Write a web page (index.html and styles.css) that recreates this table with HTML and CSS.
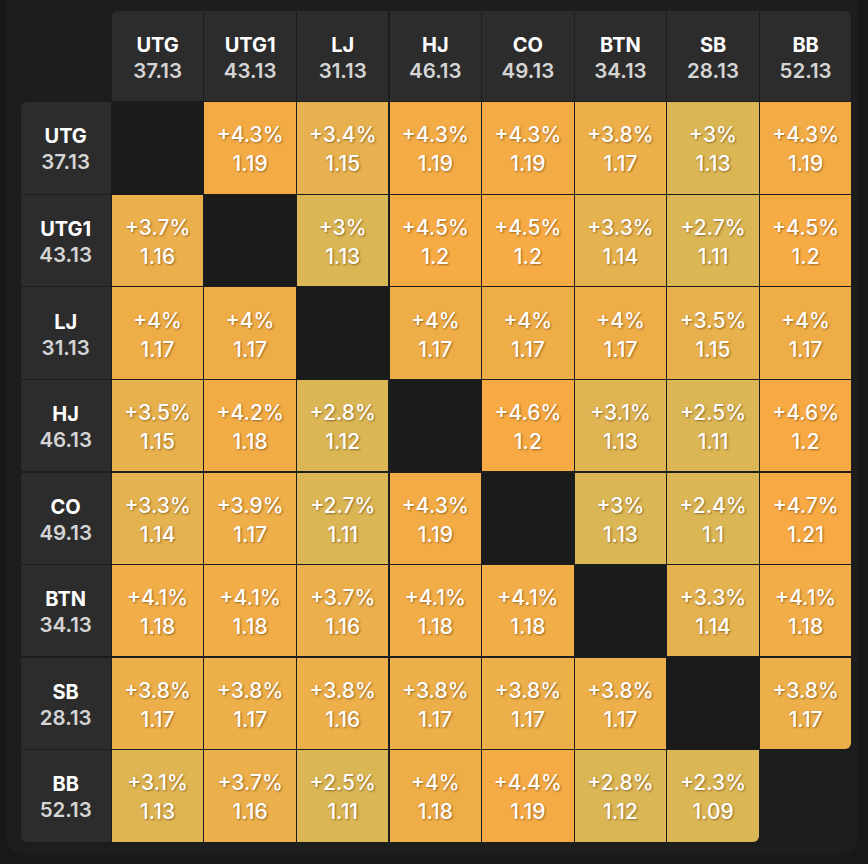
FILE: index.html
```html
<!DOCTYPE html>
<html lang="en">
<head>
<meta charset="utf-8">
<title>Position matrix</title>
<link rel="stylesheet" href="styles.css">
</head>
<body>
<div class="panel">
  <div class="matrix">
    <div class="corner"></div>
    <div class="head col-first"><span class="name">UTG</span><span class="stack">37.13</span></div>
    <div class="head"><span class="name">UTG1</span><span class="stack">43.13</span></div>
    <div class="head"><span class="name">LJ</span><span class="stack">31.13</span></div>
    <div class="head"><span class="name">HJ</span><span class="stack">46.13</span></div>
    <div class="head"><span class="name">CO</span><span class="stack">49.13</span></div>
    <div class="head"><span class="name">BTN</span><span class="stack">34.13</span></div>
    <div class="head"><span class="name">SB</span><span class="stack">28.13</span></div>
    <div class="head col-last"><span class="name">BB</span><span class="stack">52.13</span></div>

    <div class="head row-first"><span class="name">UTG</span><span class="stack">37.13</span></div>
    <div class="cell empty"></div>
    <div class="cell" style="background:#f3ac45"><span>+4.3%</span><span>1.19</span></div>
    <div class="cell" style="background:#e6b14e"><span>+3.4%</span><span>1.15</span></div>
    <div class="cell" style="background:#f3ac45"><span>+4.3%</span><span>1.19</span></div>
    <div class="cell" style="background:#f3ac45"><span>+4.3%</span><span>1.19</span></div>
    <div class="cell" style="background:#ecaf4a"><span>+3.8%</span><span>1.17</span></div>
    <div class="cell" style="background:#dbb655"><span>+3%</span><span>1.13</span></div>
    <div class="cell" style="background:#f3ac45"><span>+4.3%</span><span>1.19</span></div>

    <div class="head"><span class="name">UTG1</span><span class="stack">43.13</span></div>
    <div class="cell" style="background:#ebaf4b"><span>+3.7%</span><span>1.16</span></div>
    <div class="cell empty"></div>
    <div class="cell" style="background:#dbb655"><span>+3%</span><span>1.13</span></div>
    <div class="cell" style="background:#f6ab44"><span>+4.5%</span><span>1.2</span></div>
    <div class="cell" style="background:#f6ab44"><span>+4.5%</span><span>1.2</span></div>
    <div class="cell" style="background:#e4b24f"><span>+3.3%</span><span>1.14</span></div>
    <div class="cell" style="background:#dbb655"><span>+2.7%</span><span>1.11</span></div>
    <div class="cell" style="background:#f6ab44"><span>+4.5%</span><span>1.2</span></div>

    <div class="head"><span class="name">LJ</span><span class="stack">31.13</span></div>
    <div class="cell" style="background:#efad48"><span>+4%</span><span>1.17</span></div>
    <div class="cell" style="background:#efad48"><span>+4%</span><span>1.17</span></div>
    <div class="cell empty"></div>
    <div class="cell" style="background:#efad48"><span>+4%</span><span>1.17</span></div>
    <div class="cell" style="background:#efad48"><span>+4%</span><span>1.17</span></div>
    <div class="cell" style="background:#efad48"><span>+4%</span><span>1.17</span></div>
    <div class="cell" style="background:#e7b14d"><span>+3.5%</span><span>1.15</span></div>
    <div class="cell" style="background:#efad48"><span>+4%</span><span>1.17</span></div>

    <div class="head"><span class="name">HJ</span><span class="stack">46.13</span></div>
    <div class="cell" style="background:#e7b14d"><span>+3.5%</span><span>1.15</span></div>
    <div class="cell" style="background:#f2ac46"><span>+4.2%</span><span>1.18</span></div>
    <div class="cell" style="background:#dbb655"><span>+2.8%</span><span>1.12</span></div>
    <div class="cell empty"></div>
    <div class="cell" style="background:#f7aa43"><span>+4.6%</span><span>1.2</span></div>
    <div class="cell" style="background:#dfb452"><span>+3.1%</span><span>1.13</span></div>
    <div class="cell" style="background:#dbb655"><span>+2.5%</span><span>1.11</span></div>
    <div class="cell" style="background:#f7aa43"><span>+4.6%</span><span>1.2</span></div>

    <div class="head"><span class="name">CO</span><span class="stack">49.13</span></div>
    <div class="cell" style="background:#e4b24f"><span>+3.3%</span><span>1.14</span></div>
    <div class="cell" style="background:#eeae49"><span>+3.9%</span><span>1.17</span></div>
    <div class="cell" style="background:#dbb655"><span>+2.7%</span><span>1.11</span></div>
    <div class="cell" style="background:#f3ac45"><span>+4.3%</span><span>1.19</span></div>
    <div class="cell empty"></div>
    <div class="cell" style="background:#dbb655"><span>+3%</span><span>1.13</span></div>
    <div class="cell" style="background:#dbb655"><span>+2.4%</span><span>1.1</span></div>
    <div class="cell" style="background:#f7aa43"><span>+4.7%</span><span>1.21</span></div>

    <div class="head"><span class="name">BTN</span><span class="stack">34.13</span></div>
    <div class="cell" style="background:#f1ad47"><span>+4.1%</span><span>1.18</span></div>
    <div class="cell" style="background:#f1ad47"><span>+4.1%</span><span>1.18</span></div>
    <div class="cell" style="background:#ebaf4b"><span>+3.7%</span><span>1.16</span></div>
    <div class="cell" style="background:#f1ad47"><span>+4.1%</span><span>1.18</span></div>
    <div class="cell" style="background:#f1ad47"><span>+4.1%</span><span>1.18</span></div>
    <div class="cell empty"></div>
    <div class="cell" style="background:#e4b24f"><span>+3.3%</span><span>1.14</span></div>
    <div class="cell" style="background:#f1ad47"><span>+4.1%</span><span>1.18</span></div>

    <div class="head"><span class="name">SB</span><span class="stack">28.13</span></div>
    <div class="cell" style="background:#ecaf4a"><span>+3.8%</span><span>1.17</span></div>
    <div class="cell" style="background:#ecaf4a"><span>+3.8%</span><span>1.17</span></div>
    <div class="cell" style="background:#ecaf4a"><span>+3.8%</span><span>1.16</span></div>
    <div class="cell" style="background:#ecaf4a"><span>+3.8%</span><span>1.17</span></div>
    <div class="cell" style="background:#ecaf4a"><span>+3.8%</span><span>1.17</span></div>
    <div class="cell" style="background:#ecaf4a"><span>+3.8%</span><span>1.17</span></div>
    <div class="cell empty"></div>
    <div class="cell round-br" style="background:#ecaf4a"><span>+3.8%</span><span>1.17</span></div>

    <div class="head row-last"><span class="name">BB</span><span class="stack">52.13</span></div>
    <div class="cell" style="background:#dfb452"><span>+3.1%</span><span>1.13</span></div>
    <div class="cell" style="background:#ebaf4b"><span>+3.7%</span><span>1.16</span></div>
    <div class="cell" style="background:#dbb655"><span>+2.5%</span><span>1.11</span></div>
    <div class="cell" style="background:#efad48"><span>+4%</span><span>1.18</span></div>
    <div class="cell" style="background:#f5ab45"><span>+4.4%</span><span>1.19</span></div>
    <div class="cell" style="background:#dbb655"><span>+2.8%</span><span>1.12</span></div>
    <div class="cell round-br" style="background:#dbb655"><span>+2.3%</span><span>1.09</span></div>
    <div class="cell none"></div>
  </div>
</div>
</body>
</html>
```

FILE: styles.css
```css
html, body {
  margin: 0;
  padding: 0;
}

body {
  background: #181818;
  width: 868px;
  height: 864px;
  overflow: hidden;
  font-family: Inter, "Noto Sans", "Liberation Sans", sans-serif;
}

.panel {
  margin-left: 7px;
  width: 851px;
  height: 855px;
  box-sizing: border-box;
  padding: 11px 0 0 13.7px;
  background: #1d1d1d;
  border-radius: 0 0 16px 16px;
}

.matrix {
  display: grid;
  grid-template-columns: 90px repeat(8, 91.4px);
  grid-template-rows: 90px repeat(8, 91.4px);
  gap: 1.2px;
}

.corner {
  background: transparent;
}

.head {
  background: #2c2c2c;
  color: #ffffff;
  display: flex;
  flex-direction: column;
  align-items: center;
  justify-content: center;
  box-sizing: border-box;
  padding-top: 3px;
  font-size: 20px;
  line-height: 26px;
}

.head .name {
  font-weight: 700;
}

.head .stack {
  font-weight: 600;
  color: #d4d4d4;
  font-size: 20.5px;
}

.col-first { border-top-left-radius: 6px; }
.col-last { border-top-right-radius: 6px; }
.row-first { border-top-left-radius: 6px; }
.row-last { border-bottom-left-radius: 6px; }

.cell {
  display: flex;
  flex-direction: column;
  align-items: center;
  justify-content: center;
  box-sizing: border-box;
  padding-top: 3px;
  color: #ffffff;
  font-size: 21px;
  font-weight: 500;
  line-height: 29px;
  text-shadow: 1px 1px 2px rgba(70, 35, 0, 0.5);
}

.cell.empty {
  background: #1b1b1b;
}

.cell.none {
  background: transparent;
}

.round-br {
  border-bottom-right-radius: 6px;
}
```
